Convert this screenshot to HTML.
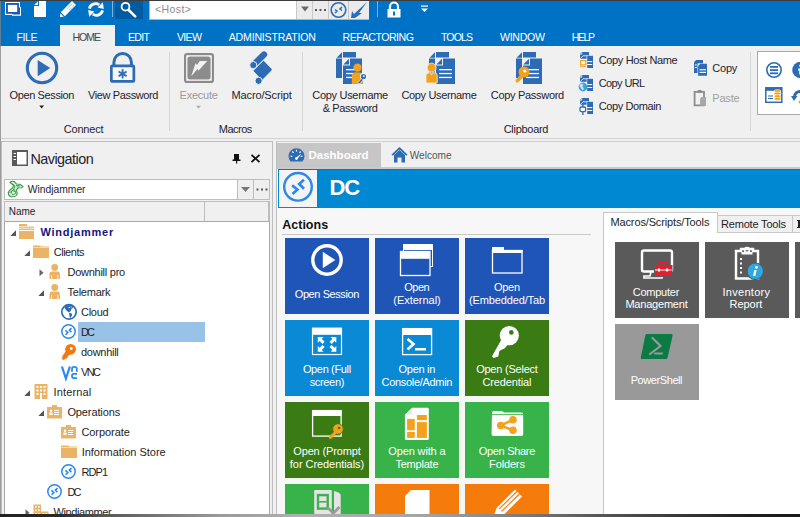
<!DOCTYPE html>
<html><head><meta charset="utf-8"><style>
html,body{margin:0;padding:0;width:800px;height:517px;overflow:hidden;background:#F0F0F0;}
.t{position:absolute;white-space:nowrap;line-height:1;font-family:"Liberation Sans", sans-serif;}
.r{position:absolute;}
.s{position:absolute;overflow:visible;}
</style></head><body>
<div class="r" style="left:0px;top:0px;width:800px;height:517px;background:#F0F0F0;"></div>
<div class="r" style="left:0px;top:0px;width:800px;height:46px;background:#0072C6;"></div>
<div class="r" style="left:0px;top:0px;width:800px;height:1px;background:#3d3d3d;"></div>
<div class="r" style="left:0px;top:1px;width:1px;height:516px;background:rgba(130,130,130,0.75);"></div>
<svg class="s" style="left:4px;top:1px" width="18" height="16" viewBox="0 0 18 16"><path d="M1 0.9 H16 V6 H17 V14.7 H8 V14 H1 Z" fill="#fff"/><rect x="2" y="2" width="12.9" height="10.8" fill="#1F56B0"/><rect x="8.5" y="6.5" width="7.5" height="7" fill="#1F56B0"/><rect x="3.9" y="3.9" width="9.3" height="7.1" fill="#fff"/></svg>
<svg class="s" style="left:33px;top:0px" width="14" height="18" viewBox="0 0 14 18"><path d="M6 1 H13 V17 H1 V6 H6 Z" fill="#fff"/><path d="M5 1.2 V5 H1.2 Z" fill="#fff"/></svg>
<svg class="s" style="left:59px;top:0px" width="18" height="18" viewBox="0 0 18 18"><path d="M1.8 12.3 L13 1.1 L17 5.1 L5.8 16.3 Z" fill="#fff"/><path d="M1 17 L1.3 13.3 L4.7 16.7 Z" fill="#fff"/><path d="M8.6 8.3 L13.8 3.1 M10.4 10 L15.6 4.8" stroke="#0072C6" stroke-width="0.7" stroke-dasharray="1 0.8"/></svg>
<svg class="s" style="left:87px;top:1px" width="18" height="17" viewBox="0 0 18 17"><path d="M2.4 7.6 A6.4 6.4 0 0 1 12.2 3.8" stroke="#fff" stroke-width="2.8" fill="none"/><path d="M10.6 6.6 L15.8 1.3 L16.8 7.9 Z" fill="#fff"/><path d="M15.6 9.4 A6.4 6.4 0 0 1 5.8 13.2" stroke="#fff" stroke-width="2.8" fill="none"/><path d="M7.4 10.4 L2.2 15.7 L1.2 9.1 Z" fill="#fff"/></svg>
<div class="r" style="left:112px;top:1px;width:1px;height:16px;background:#7fb2dd;"></div>
<div class="r" style="left:115px;top:1px;width:28px;height:18px;background:#005BA1;"></div>
<svg class="s" style="left:120px;top:2px" width="18" height="17" viewBox="0 0 18 17"><circle cx="5.5" cy="4.7" r="3.9" stroke="#fff" stroke-width="1.8" fill="none"/><path d="M8.6 8 L15.2 14.4" stroke="#fff" stroke-width="2.6" stroke-linecap="round"/></svg>
<div class="r" style="left:149px;top:1px;width:148px;height:18px;background:#fff;box-sizing:border-box;border-left:1px solid #9fb8d0;"></div>
<div class="t" style="left:155.0px;top:4px;font-size:10.5px;font-weight:400;color:#8c8c8c;letter-spacing:0.427px;">&lt;Host&gt;</div>
<div class="r" style="left:297px;top:1px;width:72px;height:18px;background:#EBEBEB;"></div>
<div class="r" style="left:296px;top:1px;width:1px;height:18px;background:#c8c8c8;"></div>
<div class="r" style="left:312px;top:1px;width:1px;height:18px;background:#c8c8c8;"></div>
<div class="r" style="left:328px;top:1px;width:1px;height:18px;background:#c8c8c8;"></div>
<div class="r" style="left:348px;top:1px;width:1px;height:18px;background:#c8c8c8;"></div>
<div class="r" style="left:149px;top:19px;width:220px;height:1px;background:#b4b4b4;"></div>
<svg class="s" style="left:300px;top:5px" width="10" height="8" viewBox="0 0 10 8"><path d="M1 1.5 H9 L5 6.5 Z" fill="#6a6a6a"/></svg>
<svg class="s" style="left:313px;top:8px" width="15" height="4" viewBox="0 0 15 4"><rect x="2" y="1" width="2" height="2" fill="#555"/><rect x="6.5" y="1" width="2" height="2" fill="#555"/><rect x="11" y="1" width="2" height="2" fill="#555"/></svg>
<svg class="s" style="left:329px;top:1px" width="19" height="18" viewBox="0 0 19 18"><circle cx="9.5" cy="9" r="7.3" fill="none" stroke="#2d6db5" stroke-width="1.6"/><path d="M6 8.5 L8 10 L6 12 M13 6 L11 8 L13 9.5" fill="none" stroke="#2d6db5" stroke-width="1.5"/></svg>
<svg class="s" style="left:349px;top:1px" width="20" height="18" viewBox="0 0 20 18"><path d="M18 1 L10 12 L13 12 L6 17 L2 17 L3 10 L5 13 Z" fill="#2d6db5"/></svg>
<div class="r" style="left:377px;top:1px;width:1px;height:16px;background:#7fb2dd;"></div>
<svg class="s" style="left:386px;top:1px" width="16" height="17" viewBox="0 0 16 17"><path d="M4 8 V5.5 A4 4 0 0 1 12 5.5 V8" stroke="#fff" stroke-width="2.2" fill="none"/><rect x="1.5" y="8" width="13" height="8.5" fill="#fff"/><rect x="7" y="10.5" width="2" height="4" fill="#0072C6"/></svg>
<svg class="s" style="left:420px;top:4px" width="9" height="9" viewBox="0 0 9 9"><rect x="1" y="1.5" width="7" height="1.2" fill="#fff"/><path d="M1 4.5 H8 L4.5 8 Z" fill="#fff"/></svg>
<div class="r" style="left:60px;top:25px;width:55px;height:21px;background:#F0F0F0;"></div>
<div class="t" style="left:16.5px;top:32px;font-size:10.6px;font-weight:400;color:#fff;letter-spacing:-0.455px;">FILE</div>
<div class="t" style="left:72.5px;top:32px;font-size:10.6px;font-weight:400;color:#444;letter-spacing:-1.1px;">HOME</div>
<div class="t" style="left:128.0px;top:32px;font-size:10.6px;font-weight:400;color:#fff;letter-spacing:-0.723px;">EDIT</div>
<div class="t" style="left:176.9px;top:32px;font-size:10.6px;font-weight:400;color:#fff;letter-spacing:-0.694px;">VIEW</div>
<div class="t" style="left:228.75px;top:32px;font-size:10.6px;font-weight:400;color:#fff;letter-spacing:-0.203px;">ADMINISTRATION</div>
<div class="t" style="left:342.5px;top:32px;font-size:10.6px;font-weight:400;color:#fff;letter-spacing:-0.487px;">REFACTORING</div>
<div class="t" style="left:441.0px;top:32px;font-size:10.6px;font-weight:400;color:#fff;letter-spacing:-0.931px;">TOOLS</div>
<div class="t" style="left:500.0px;top:32px;font-size:10.6px;font-weight:400;color:#fff;letter-spacing:-0.307px;">WINDOW</div>
<div class="t" style="left:571.75px;top:32px;font-size:10.6px;font-weight:400;color:#fff;letter-spacing:-1.472px;">HELP</div>
<div class="r" style="left:1px;top:138px;width:799px;height:1px;background:#D2D2D2;"></div>
<div class="r" style="left:169px;top:52px;width:1px;height:79px;background:#D6D6D6;"></div>
<div class="r" style="left:302px;top:52px;width:1px;height:79px;background:#D6D6D6;"></div>
<div class="r" style="left:750px;top:52px;width:1px;height:79px;background:#D6D6D6;"></div>
<div class="t" style="left:9.6px;top:90px;font-size:11px;font-weight:400;color:#23232f;letter-spacing:-0.389px;">Open Session</div>
<svg class="s" style="left:37px;top:105px" width="8" height="5" viewBox="0 0 8 5"><path d="M2.3 0.6 H7 L4.65 3.6 Z" fill="#222"/></svg>
<div class="t" style="left:88.0px;top:90px;font-size:11px;font-weight:400;color:#23232f;letter-spacing:-0.377px;">View Password</div>
<div class="t" style="left:63.8px;top:124px;font-size:11px;font-weight:400;color:#23232f;letter-spacing:-0.212px;">Connect</div>
<div class="t" style="left:179.5px;top:90px;font-size:11px;font-weight:400;color:#9a9a9a;letter-spacing:-0.211px;">Execute</div>
<svg class="s" style="left:194px;top:105px" width="8" height="5" viewBox="0 0 8 5"><path d="M2 0.8 H7 L4.5 3.6 Z" fill="#aaa"/></svg>
<div class="t" style="left:231.5px;top:90px;font-size:11px;font-weight:400;color:#23232f;letter-spacing:-0.133px;">Macro/Script</div>
<div class="t" style="left:218.8px;top:124px;font-size:11px;font-weight:400;color:#23232f;letter-spacing:-0.516px;">Macros</div>
<div class="t" style="left:312.25px;top:90px;font-size:11px;font-weight:400;color:#23232f;letter-spacing:-0.294px;">Copy Username</div>
<div class="t" style="left:322.75px;top:103px;font-size:11px;font-weight:400;color:#23232f;letter-spacing:-0.409px;">&amp; Password</div>
<div class="t" style="left:401.5px;top:90px;font-size:11px;font-weight:400;color:#23232f;letter-spacing:-0.352px;">Copy Username</div>
<div class="t" style="left:490.75px;top:90px;font-size:11px;font-weight:400;color:#23232f;letter-spacing:-0.296px;">Copy Password</div>
<div class="t" style="left:503.7px;top:124px;font-size:11px;font-weight:400;color:#23232f;letter-spacing:-0.285px;">Clipboard</div>
<div class="t" style="left:598.75px;top:55px;font-size:11px;font-weight:400;color:#23232f;letter-spacing:-0.367px;">Copy Host Name</div>
<div class="t" style="left:598.75px;top:78px;font-size:11px;font-weight:400;color:#23232f;letter-spacing:-0.609px;">Copy URL</div>
<div class="t" style="left:598.75px;top:101px;font-size:11px;font-weight:400;color:#23232f;letter-spacing:-0.396px;">Copy Domain</div>
<div class="t" style="left:712.3px;top:63px;font-size:11px;font-weight:400;color:#23232f;letter-spacing:-0.228px;">Copy</div>
<div class="t" style="left:712.3px;top:93px;font-size:11px;font-weight:400;color:#a0a0a0;letter-spacing:-0.201px;">Paste</div>
<div class="r" style="left:757px;top:51px;width:43px;height:64px;background:#fff;box-sizing:border-box;border:1px solid #a8a8a8;border-right:none;"></div>
<div class="r" style="left:1px;top:141px;width:272px;height:373px;background:#F0F0F0;box-sizing:border-box;border:1px solid #BDBDBD;border-bottom:none;"></div>
<svg class="s" style="left:12px;top:150px" width="16" height="16" viewBox="0 0 16 16"><rect x="0" y="0" width="16" height="16" fill="#595959"/><rect x="5" y="2" width="9.5" height="12.5" fill="#fff"/><rect x="1.5" y="3" width="2.5" height="1" fill="#fff"/><rect x="1.5" y="6" width="2.5" height="1" fill="#fff"/><rect x="1.5" y="9" width="2.5" height="1" fill="#fff"/></svg>
<div class="t" style="left:30.4px;top:152px;font-size:14.4px;font-weight:400;color:#23232f;letter-spacing:-0.516px;">Navigation</div>
<svg class="s" style="left:232px;top:154px" width="9" height="10" viewBox="0 0 9 10"><rect x="2" y="0" width="5" height="6" fill="#111"/><rect x="0.5" y="5.5" width="8" height="1.5" fill="#111"/><rect x="4" y="6.5" width="1.2" height="3" fill="#111"/></svg>
<svg class="s" style="left:250px;top:154px" width="11" height="9" viewBox="0 0 11 9"><path d="M1.5 0.8 L9.5 8.2 M9.5 0.8 L1.5 8.2" stroke="#111" stroke-width="1.8"/></svg>
<div class="r" style="left:4px;top:179px;width:266px;height:21px;background:#fff;box-sizing:border-box;border:1px solid #BDBDBD;"></div>
<div class="r" style="left:237px;top:180px;width:32px;height:19px;background:#EFEFEF;"></div>
<div class="r" style="left:237px;top:180px;width:1px;height:19px;background:#BDBDBD;"></div>
<div class="r" style="left:253px;top:180px;width:1px;height:19px;background:#BDBDBD;"></div>
<svg class="s" style="left:240px;top:186px" width="11" height="7" viewBox="0 0 11 7"><path d="M1 1 H10 L5.5 6 Z" fill="#777"/></svg>
<svg class="s" style="left:255px;top:188px" width="14" height="3" viewBox="0 0 14 3"><rect x="1.5" y="0.5" width="2" height="2" fill="#555"/><rect x="6" y="0.5" width="2" height="2" fill="#555"/><rect x="10.5" y="0.5" width="2" height="2" fill="#555"/></svg>
<svg class="s" style="left:8px;top:181px" width="16" height="17" viewBox="0 0 16 17"><path d="M2 1.5 Q4 -0.5 6.5 0.8 L8.5 3 L12 3.2 L15 5.5 L13.5 6.8 L10 7 L8.5 9 L9.2 12.5 Q8.5 15.5 6 15.8 L3 15.6 Q0 14.5 0.3 11.5 Q0.8 9.5 4.5 7 L5.8 4.5 Z" fill="#DDF0E0" stroke="#2E9E44" stroke-width="1.1"/><g fill="none" stroke="#2E9E44" stroke-width="0.9"><path d="M3.5 2.5 L7 5 L6 8 L3 11 L5 14 L8 12 L6 8"/><path d="M8 4.5 L12 5 M9 6.5 L11 4"/><path d="M1.5 12 L4 9.5 L7.5 10.5"/></g></svg>
<div class="t" style="left:27.75px;top:185px;font-size:10.3px;font-weight:400;color:#23232f;">Windjammer</div>
<div class="r" style="left:4px;top:201px;width:266px;height:21px;background:#F0F0F0;box-sizing:border-box;border:1px solid #BDBDBD;border-bottom-color:#A8A8A8;"></div>
<div class="r" style="left:204px;top:202px;width:1px;height:19px;background:#BDBDBD;"></div>
<div class="r" style="left:268px;top:202px;width:1px;height:19px;background:#BDBDBD;"></div>
<div class="t" style="left:8.7px;top:207px;font-size:10px;font-weight:400;color:#23232f;">Name</div>
<div class="r" style="left:4px;top:222px;width:266px;height:292px;background:#fff;box-sizing:border-box;border-left:1px solid #A8A8A8;border-right:1px solid #A8A8A8;"></div>
<div class="r" style="left:78px;top:322px;width:127px;height:20px;background:#99C2E8;"></div>
<svg class="s" style="left:10px;top:230px" width="7" height="7" viewBox="0 0 7 7"><path d="M6 0.3 V6 H0.3 Z" fill="#555"/></svg>
<svg class="s" style="left:19px;top:224px" width="16" height="15" viewBox="0 0 16 15"><rect x="0" y="0" width="8" height="2" fill="#EAB464"/><rect x="0" y="2.6" width="15" height="1.2" fill="#EAB464"/><rect x="0" y="4.6" width="15" height="1.4" fill="#EAB464"/><rect x="0" y="7" width="15" height="8" fill="#EAB464"/></svg>
<div class="t" style="left:40.4px;top:227px;font-size:11px;font-weight:700;color:#15157a;letter-spacing:0.768px;">Windjammer</div>
<svg class="s" style="left:24px;top:250px" width="7" height="7" viewBox="0 0 7 7"><path d="M6 0.3 V6 H0.3 Z" fill="#555"/></svg>
<svg class="s" style="left:33px;top:245px" width="16" height="13" viewBox="0 0 16 13"><path d="M0 0.5 H7 L8 1.5 H16 V2 H0 Z" fill="#EAB464"/><rect x="0" y="2.5" width="16" height="10.5" fill="#EAB464"/></svg>
<div class="t" style="left:53.7px;top:247px;font-size:11px;font-weight:400;color:#1e1e1e;letter-spacing:-0.468px;">Clients</div>
<svg class="s" style="left:39px;top:269px" width="5" height="8" viewBox="0 0 5 8"><path d="M0.5 0.3 L4.5 3.8 L0.5 7.3 Z" fill="#666"/></svg>
<svg class="s" style="left:49px;top:264px" width="12" height="15" viewBox="0 0 12 15"><circle cx="5.7" cy="3.5" r="3.4" fill="#EAB464"/><path d="M0.5 15 V9.8 Q0.5 7.5 2.8 7.5 H8.6 Q10.9 7.5 10.9 9.8 V15 Z" fill="#EAB464"/><rect x="2.2" y="11" width="0.8" height="4" fill="#fff"/><rect x="8.4" y="11" width="0.8" height="4" fill="#fff"/></svg>
<div class="t" style="left:67.5px;top:267px;font-size:11px;font-weight:400;color:#1e1e1e;letter-spacing:-0.26px;">Downhill pro</div>
<svg class="s" style="left:38px;top:290px" width="7" height="7" viewBox="0 0 7 7"><path d="M6 0.3 V6 H0.3 Z" fill="#555"/></svg>
<svg class="s" style="left:49px;top:284px" width="12" height="15" viewBox="0 0 12 15"><circle cx="5.7" cy="3.5" r="3.4" fill="#EAB464"/><path d="M0.5 15 V9.8 Q0.5 7.5 2.8 7.5 H8.6 Q10.9 7.5 10.9 9.8 V15 Z" fill="#EAB464"/><rect x="2.2" y="11" width="0.8" height="4" fill="#fff"/><rect x="8.4" y="11" width="0.8" height="4" fill="#fff"/></svg>
<div class="t" style="left:67.5px;top:287px;font-size:11px;font-weight:400;color:#1e1e1e;letter-spacing:-0.237px;">Telemark</div>
<svg class="s" style="left:61px;top:304px" width="16" height="16" viewBox="0 0 16 16"><circle cx="8" cy="7.9" r="7.2" fill="none" stroke="#2D6DB5" stroke-width="1.7"/><path d="M3.3 2.6 L6 0.8 L10 0.8 L12.2 2.2 L11.8 4 L10.4 5 L9.8 7 L8.5 8 L7.8 8.6 L6 7 L4.3 5.3 Z" fill="#2D6DB5"/><path d="M8.3 8.8 L10.6 9.5 L11.3 11 L10 13 L9 14.8 L8.5 12 L8 10 Z" fill="#2D6DB5"/><circle cx="8.2" cy="3.4" r="0.7" fill="#fff"/><circle cx="10.2" cy="3" r="0.6" fill="#fff"/></svg>
<div class="t" style="left:81.0px;top:307px;font-size:11px;font-weight:400;color:#1e1e1e;letter-spacing:-0.291px;">Cloud</div>
<svg class="s" style="left:61px;top:324px" width="15" height="15" viewBox="0 0 15 15"><circle cx="7.5" cy="7.5" r="6.7" fill="#fff" stroke="#2B88F0" stroke-width="1.5"/><path d="M4.4 6.4 L6.8 8.5 L4.6 10.7 M10.5 4.2 L8.4 6.1 L10.4 8.2" fill="none" stroke="#2B88F0" stroke-width="1.6"/></svg>
<div class="t" style="left:81.0px;top:327px;font-size:11px;font-weight:400;color:#1e1e1e;letter-spacing:-1.895px;">DC</div>
<svg class="s" style="left:62px;top:344px" width="15" height="16" viewBox="0 0 15 16"><circle cx="8.6" cy="5.3" r="5.4" fill="#F07A10"/><circle cx="9.3" cy="4.5" r="1.4" fill="#fff"/><path d="M4.2 6.5 L8.6 9.8 L5.5 12.8 L5.5 13.8 L4.5 14.5 L3.5 14.5 L2.5 15.8 H0.3 V12.2 Z" fill="#F07A10"/></svg>
<div class="t" style="left:81.0px;top:347px;font-size:11px;font-weight:400;color:#1e1e1e;letter-spacing:-0.281px;">downhill</div>
<svg class="s" style="left:61px;top:366px" width="17" height="14" viewBox="0 0 17 14"><path d="M0.9 0.5 L4.9 12.6 L8.9 0.5" fill="none" stroke="#2B88F0" stroke-width="2.2"/><path d="M11 5.8 V2.8 Q11 0.8 13.4 0.8 Q15.8 0.8 15.8 2.8 V5.8" fill="none" stroke="#2B88F0" stroke-width="1.8"/><path d="M16 7.8 H12.8 Q11 7.8 11 10.1 Q11 12.2 12.8 12.2 H16" fill="none" stroke="#2B88F0" stroke-width="1.8"/></svg>
<div class="t" style="left:81.0px;top:367px;font-size:11px;font-weight:400;color:#1e1e1e;letter-spacing:-1.605px;">VNC</div>
<svg class="s" style="left:24px;top:390px" width="7" height="7" viewBox="0 0 7 7"><path d="M6 0.3 V6 H0.3 Z" fill="#555"/></svg>
<svg class="s" style="left:34px;top:384px" width="14" height="15" viewBox="0 0 14 15"><rect x="0.5" y="0" width="13" height="15" fill="#EAB464"/><g fill="#fff"><rect x="2.5" y="2" width="2" height="2"/><rect x="6" y="2" width="2" height="2"/><rect x="9.5" y="2" width="2" height="2"/><rect x="2.5" y="5.5" width="2" height="2"/><rect x="6" y="5.5" width="2" height="2"/><rect x="9.5" y="5.5" width="2" height="2"/><rect x="2.5" y="9" width="2" height="2"/><rect x="9.5" y="9" width="2" height="2"/><rect x="6" y="9" width="2" height="6"/></g></svg>
<div class="t" style="left:53.6px;top:387px;font-size:11px;font-weight:400;color:#1e1e1e;letter-spacing:0.145px;">Internal</div>
<svg class="s" style="left:38px;top:410px" width="7" height="7" viewBox="0 0 7 7"><path d="M6 0.3 V6 H0.3 Z" fill="#555"/></svg>
<svg class="s" style="left:47px;top:405px" width="16" height="14" viewBox="0 0 16 14"><rect x="5" y="0" width="5" height="3" fill="#EAB464"/><rect x="0" y="2" width="15" height="11.5" fill="#EAB464"/><g fill="#fff"><circle cx="4" cy="5.8" r="1.2"/><rect x="2.5" y="7.5" width="3" height="2.5"/><rect x="7" y="5" width="5" height="1"/><rect x="7" y="7" width="5" height="1"/><rect x="7" y="9" width="5" height="1"/></g></svg>
<div class="t" style="left:67.4px;top:407px;font-size:11px;font-weight:400;color:#1e1e1e;letter-spacing:-0.11px;">Operations</div>
<svg class="s" style="left:61px;top:425px" width="16" height="14" viewBox="0 0 16 14"><rect x="5" y="0" width="5" height="3" fill="#EAB464"/><rect x="0" y="2" width="15" height="11.5" fill="#EAB464"/><g fill="#fff"><circle cx="4" cy="5.8" r="1.2"/><rect x="2.5" y="7.5" width="3" height="2.5"/><rect x="7" y="5" width="5" height="1"/><rect x="7" y="7" width="5" height="1"/><rect x="7" y="9" width="5" height="1"/></g></svg>
<div class="t" style="left:81.4px;top:427px;font-size:11px;font-weight:400;color:#1e1e1e;letter-spacing:-0.062px;">Corporate</div>
<svg class="s" style="left:61px;top:445px" width="16" height="13" viewBox="0 0 16 13"><path d="M0 0.5 H7 L8 1.5 H16 V2 H0 Z" fill="#EAB464"/><rect x="0" y="2.5" width="16" height="10.5" fill="#EAB464"/></svg>
<div class="t" style="left:81.7px;top:447px;font-size:11px;font-weight:400;color:#1e1e1e;letter-spacing:-0.023px;">Information Store</div>
<svg class="s" style="left:61px;top:464px" width="15" height="15" viewBox="0 0 15 15"><circle cx="7.5" cy="7.5" r="6.7" fill="#fff" stroke="#2B88F0" stroke-width="1.5"/><path d="M4.4 6.4 L6.8 8.5 L4.6 10.7 M10.5 4.2 L8.4 6.1 L10.4 8.2" fill="none" stroke="#2B88F0" stroke-width="1.6"/></svg>
<div class="t" style="left:81.4px;top:467px;font-size:11px;font-weight:400;color:#1e1e1e;letter-spacing:-0.89px;">RDP1</div>
<svg class="s" style="left:47px;top:484px" width="15" height="15" viewBox="0 0 15 15"><circle cx="7.5" cy="7.5" r="6.7" fill="#fff" stroke="#2B88F0" stroke-width="1.5"/><path d="M4.4 6.4 L6.8 8.5 L4.6 10.7 M10.5 4.2 L8.4 6.1 L10.4 8.2" fill="none" stroke="#2B88F0" stroke-width="1.6"/></svg>
<div class="t" style="left:67.4px;top:487px;font-size:11px;font-weight:400;color:#1e1e1e;letter-spacing:-1.895px;">DC</div>
<svg class="s" style="left:25px;top:509px" width="5" height="8" viewBox="0 0 5 8"><path d="M0.5 0.3 L4.5 3.8 L0.5 7.3 Z" fill="#666"/></svg>
<svg class="s" style="left:33px;top:504px" width="16" height="15" viewBox="0 0 16 15"><rect x="0.5" y="0.5" width="7.5" height="14" fill="#EAB464"/><rect x="8" y="7.5" width="7.5" height="7" fill="#EAB464"/><g fill="#fff"><rect x="2" y="2" width="1.6" height="1.6"/><rect x="5" y="2" width="1.6" height="1.6"/><rect x="2" y="5.5" width="1.6" height="1.6"/><rect x="5" y="5.5" width="1.6" height="1.6"/><rect x="2" y="9" width="1.6" height="1.6"/><rect x="5" y="9" width="1.6" height="1.6"/><rect x="9.5" y="9" width="1.6" height="1.6"/><rect x="12.5" y="9" width="1.6" height="1.6"/></g></svg>
<div class="t" style="left:53.6px;top:507px;font-size:11px;font-weight:400;color:#1e1e1e;letter-spacing:-0.412px;">Windjammer</div>
<div class="r" style="left:276px;top:141px;width:524px;height:373px;background:#F7F7F7;box-sizing:border-box;border-left:1px solid #BDBDBD;border-top:1px solid #CFCFCF;"></div>
<div class="r" style="left:277px;top:142px;width:523px;height:26px;background:#F0F0F0;"></div>
<div class="r" style="left:277px;top:167px;width:523px;height:2px;background:#C9C9C9;"></div>
<div class="r" style="left:277px;top:143px;width:104px;height:24px;background:#C6C6C6;"></div>
<div class="t" style="left:308.5px;top:150px;font-size:11.5px;font-weight:700;color:#fff;">Dashboard</div>
<div class="t" style="left:409.75px;top:151px;font-size:10.1px;font-weight:400;color:#555;">Welcome</div>
<div class="r" style="left:278px;top:169px;width:522px;height:39px;background:#0089D3;"></div>
<div class="r" style="left:278px;top:169px;width:522px;height:1px;background:#0079C9;"></div>
<div class="r" style="left:279px;top:170px;width:38px;height:37px;background:#F4F4F4;"></div>
<div class="t" style="left:329.5px;top:177px;font-size:22px;font-weight:700;color:#fff;letter-spacing:-1.2px;">DC</div>
<div class="t" style="left:282.25px;top:219px;font-size:12.5px;font-weight:700;color:#111;">Actions</div>
<div class="r" style="left:282px;top:234px;width:309px;height:1px;background:#C8C8C8;"></div>
<div class="r" style="left:285px;top:238px;width:84px;height:76px;background:#1F55B6;"></div>
<div class="r" style="left:375px;top:238px;width:84px;height:76px;background:#1F55B6;"></div>
<div class="r" style="left:465px;top:238px;width:84px;height:76px;background:#1F55B6;"></div>
<div class="r" style="left:285px;top:320px;width:84px;height:76px;background:#0A8AD5;"></div>
<div class="r" style="left:375px;top:320px;width:84px;height:76px;background:#0A8AD5;"></div>
<div class="r" style="left:465px;top:320px;width:84px;height:76px;background:#3A7B14;"></div>
<div class="r" style="left:285px;top:402px;width:84px;height:76px;background:#3A7B14;"></div>
<div class="r" style="left:375px;top:402px;width:84px;height:76px;background:#37B34A;"></div>
<div class="r" style="left:465px;top:402px;width:84px;height:76px;background:#37B34A;"></div>
<div class="r" style="left:285px;top:484px;width:84px;height:30px;background:#37B34A;"></div>
<div class="r" style="left:375px;top:484px;width:84px;height:30px;background:#F57C0A;"></div>
<div class="r" style="left:465px;top:484px;width:84px;height:30px;background:#F57C0A;"></div>
<div class="t" style="left:294.75px;top:289px;font-size:11px;font-weight:400;color:#fff;letter-spacing:-0.416px;">Open Session</div>
<div class="t" style="left:404.3px;top:282px;font-size:11px;font-weight:400;color:#fff;letter-spacing:-0.498px;">Open</div>
<div class="t" style="left:393.25px;top:295px;font-size:11px;font-weight:400;color:#fff;letter-spacing:-0.021px;">(External)</div>
<div class="t" style="left:493.95px;top:282px;font-size:11px;font-weight:400;color:#fff;letter-spacing:-0.265px;">Open</div>
<div class="t" style="left:469.0px;top:295px;font-size:11px;font-weight:400;color:#fff;letter-spacing:-0.138px;">(Embedded/Tab</div>
<div class="t" style="left:302.9px;top:364px;font-size:11px;font-weight:400;color:#fff;letter-spacing:-0.352px;">Open (Full</div>
<div class="t" style="left:309.65px;top:377px;font-size:11px;font-weight:400;color:#fff;letter-spacing:-0.331px;">screen)</div>
<div class="t" style="left:398.6px;top:364px;font-size:11px;font-weight:400;color:#fff;letter-spacing:-0.293px;">Open in</div>
<div class="t" style="left:381.55px;top:377px;font-size:11px;font-weight:400;color:#fff;letter-spacing:-0.307px;">Console/Admin</div>
<div class="t" style="left:476.15px;top:364px;font-size:11px;font-weight:400;color:#fff;letter-spacing:-0.226px;">Open (Select</div>
<div class="t" style="left:482.5px;top:377px;font-size:11px;font-weight:400;color:#fff;letter-spacing:-0.129px;">Credential</div>
<div class="t" style="left:293.25px;top:446px;font-size:11px;font-weight:400;color:#fff;letter-spacing:-0.144px;">Open (Prompt</div>
<div class="t" style="left:289.85px;top:459px;font-size:11px;font-weight:400;color:#fff;letter-spacing:-0.059px;">for Credentials)</div>
<div class="t" style="left:388.35px;top:446px;font-size:11px;font-weight:400;color:#fff;letter-spacing:-0.144px;">Open with a</div>
<div class="t" style="left:395.4px;top:459px;font-size:11px;font-weight:400;color:#fff;letter-spacing:-0.209px;">Template</div>
<div class="t" style="left:478.7px;top:446px;font-size:11px;font-weight:400;color:#fff;letter-spacing:-0.305px;">Open Share</div>
<div class="t" style="left:489.1px;top:459px;font-size:11px;font-weight:400;color:#fff;letter-spacing:-0.148px;">Folders</div>
<div class="r" style="left:603px;top:232px;width:197px;height:282px;background:#fff;box-sizing:border-box;border-left:1px solid #C8C8C8;"></div>
<div class="r" style="left:603px;top:212px;width:115px;height:21px;background:#fff;box-sizing:border-box;border:1px solid #C8C8C8;border-bottom:none;"></div>
<div class="r" style="left:718px;top:215px;width:75px;height:18px;background:#F0F0F0;box-sizing:border-box;border:1px solid #C8C8C8;border-left:none;"></div>
<div class="r" style="left:793px;top:215px;width:7px;height:18px;background:#F0F0F0;box-sizing:border-box;border-top:1px solid #C8C8C8;border-bottom:1px solid #C8C8C8;"></div>
<div class="r" style="left:718px;top:232px;width:82px;height:1px;background:#C8C8C8;"></div>
<div class="t" style="left:610.5px;top:217px;font-size:11px;font-weight:400;color:#1e1e1e;letter-spacing:-0.136px;">Macros/Scripts/Tools</div>
<div class="t" style="left:721.0px;top:219px;font-size:11px;font-weight:400;color:#1e1e1e;letter-spacing:-0.186px;">Remote Tools</div>
<div class="r" style="left:798px;top:220px;width:2px;height:8px;background:#222;"></div>
<div class="r" style="left:797px;top:220px;width:3px;height:1px;background:#222;"></div>
<div class="r" style="left:797px;top:227px;width:3px;height:1px;background:#222;"></div>
<div class="r" style="left:615px;top:242px;width:84px;height:76px;background:#5A5A5A;"></div>
<div class="r" style="left:705px;top:242px;width:84px;height:76px;background:#5A5A5A;"></div>
<div class="r" style="left:795px;top:242px;width:5px;height:76px;background:#5A5A5A;"></div>
<div class="r" style="left:615px;top:324px;width:84px;height:76px;background:#999999;"></div>
<div class="t" style="left:632.7px;top:287px;font-size:11px;font-weight:400;color:#fff;letter-spacing:-0.227px;">Computer</div>
<div class="t" style="left:625.4px;top:299px;font-size:11px;font-weight:400;color:#fff;letter-spacing:-0.209px;">Management</div>
<div class="t" style="left:722.5px;top:287px;font-size:11px;font-weight:400;color:#fff;letter-spacing:0.279px;">Inventory</div>
<div class="t" style="left:729.5px;top:299px;font-size:11px;font-weight:400;color:#fff;letter-spacing:-0.02px;">Report</div>
<div class="t" style="left:630.7px;top:375px;font-size:11px;font-weight:400;color:#fff;letter-spacing:-0.418px;">PowerShell</div>
<svg class="s" style="left:25px;top:51px" width="34" height="34" viewBox="0 0 34 34"><circle cx="17" cy="17" r="14.7" fill="none" stroke="#2D6BB5" stroke-width="3.1"/><path d="M12.7 9 L25.2 17.1 L12.7 25.2 Z" fill="#2D6BB5"/></svg>
<svg class="s" style="left:109px;top:51px" width="27" height="33" viewBox="0 0 27 33"><path d="M4.9 14 V11.15 A8.75 8.75 0 0 1 22.4 11.15 V14" fill="none" stroke="#2D6BB5" stroke-width="3"/><rect x="2.35" y="14.95" width="22.5" height="15.5" rx="0.8" fill="#F6F6F6" stroke="#2D6BB5" stroke-width="2.7"/><g stroke="#2D6BB5" stroke-width="1.9"><path d="M13.6 18.2 V27.4"/><path d="M9.6 20.5 L17.6 25.1"/><path d="M9.6 25.1 L17.6 20.5"/></g></svg>
<svg class="s" style="left:184px;top:53px" width="30" height="30" viewBox="0 0 30 30"><rect x="1.1" y="1.1" width="27.8" height="27.8" rx="2" fill="#fff" stroke="#8a8a8a" stroke-width="2.2"/><rect x="3.4" y="3.4" width="23.2" height="23.2" rx="2.5" fill="#8c8c8c"/><path d="M15.8 7.9 L23.3 7.9 L14.4 17.8 L13.8 15.8 L7.2 23.3 L11.5 10.2 L13 12 Z" fill="#f2f2f2"/></svg>
<svg class="s" style="left:246px;top:50px" width="30" height="36" viewBox="0 0 30 36"><path d="M18 4.6 L8.5 14" stroke="#2D6BB5" stroke-width="6.4" stroke-linecap="round"/><path d="M17.6 10.2 L25.6 18.4 Q26.7 19.6 25.6 20.8 L16 30.6 L6.8 20.8 Z" fill="#2D6BB5" stroke="#F0F0F0" stroke-width="0.9"/><circle cx="7.3" cy="15.1" r="3.6" fill="#2D6BB5" stroke="#F0F0F0" stroke-width="1"/><circle cx="12.6" cy="30.8" r="3.6" fill="#2D6BB5" stroke="#F0F0F0" stroke-width="1"/></svg>
<svg class="s" style="left:336px;top:52px" width="27" height="33" viewBox="0 0 27 33"><path d="M7 0 H20 V26 H0 V6.5 H7 Z" fill="#2D6BB5"/><path d="M6 0.3 V5.7 H0.6 Z" fill="#2D6BB5"/><rect x="6" y="5.5" width="21" height="27.5" fill="#F0F0F0"/><path d="M14 6.5 H26 V32 H7 V13.5 H14 Z" fill="#2D6BB5"/><path d="M13 6.8 V12.5 H7.3 Z" fill="#2D6BB5"/><rect x="10" y="17" width="13" height="1.3" fill="#fff"/><rect x="10" y="20.9" width="13" height="1.3" fill="#fff"/><rect x="10" y="24.8" width="13" height="1.3" fill="#fff"/></svg>
<svg class="s" style="left:350px;top:63px" width="18" height="22" viewBox="0 0 18 22"><circle cx="7.5" cy="4.6" r="4.2" fill="#F4A11E"/><path d="M1.8 21 V13 Q1.8 9.5 5 9.5 H10 Q13 9.5 13 13 V21 Z" fill="#F4A11E"/><circle cx="13.5" cy="13.5" r="3.5" fill="#fff"/><circle cx="13.5" cy="13.5" r="2.6" fill="#2D6BB5"/><circle cx="13.8" cy="13.2" r="0.9" fill="#fff"/><path d="M11.5 15.5 L8 19.5 L9.5 21 L13 17" fill="#2D6BB5" stroke="#fff" stroke-width="0.6"/></svg>
<svg class="s" style="left:429px;top:52px" width="27" height="33" viewBox="0 0 27 33"><path d="M7 0 H20 V26 H0 V6.5 H7 Z" fill="#2D6BB5"/><path d="M6 0.3 V5.7 H0.6 Z" fill="#2D6BB5"/><rect x="6" y="5.5" width="21" height="27.5" fill="#F0F0F0"/><path d="M14 6.5 H26 V32 H7 V13.5 H14 Z" fill="#2D6BB5"/><path d="M13 6.8 V12.5 H7.3 Z" fill="#2D6BB5"/><rect x="10" y="17" width="13" height="1.3" fill="#fff"/><rect x="10" y="20.9" width="13" height="1.3" fill="#fff"/><rect x="10" y="24.8" width="13" height="1.3" fill="#fff"/></svg>
<svg class="s" style="left:425px;top:62px" width="14" height="22" viewBox="0 0 14 22"><circle cx="6.6" cy="5.7" r="4.5" fill="#F4A11E" stroke="#F0F0F0" stroke-width="0.8"/><path d="M1 21 V13.5 Q1 10.8 4 10.8 H5.8 L6.6 13 L7.4 10.8 H9.2 Q12.2 10.8 12.2 13.5 V21 Z" fill="#F4A11E" stroke="#F0F0F0" stroke-width="0.8"/></svg>
<svg class="s" style="left:516px;top:52px" width="27" height="33" viewBox="0 0 27 33"><path d="M7 0 H20 V26 H0 V6.5 H7 Z" fill="#2D6BB5"/><path d="M6 0.3 V5.7 H0.6 Z" fill="#2D6BB5"/><rect x="6" y="5.5" width="21" height="27.5" fill="#F0F0F0"/><path d="M14 6.5 H26 V32 H7 V13.5 H14 Z" fill="#2D6BB5"/><path d="M13 6.8 V12.5 H7.3 Z" fill="#2D6BB5"/><rect x="10" y="17" width="13" height="1.3" fill="#fff"/><rect x="10" y="20.9" width="13" height="1.3" fill="#fff"/><rect x="10" y="24.8" width="13" height="1.3" fill="#fff"/></svg>
<svg class="s" style="left:515px;top:66px" width="16" height="18" viewBox="0 0 16 18"><circle cx="9" cy="6" r="5.5" fill="#F4A11E"/><circle cx="9.8" cy="5" r="1.6" fill="#fff"/><path d="M5 9 L8 11.5 L3 16.5 L1 16.5 L0.5 14 Z" fill="#F4A11E"/></svg>
<svg class="s" style="left:579px;top:51px" width="15" height="18" viewBox="0 0 15 18"><path d="M3.2 1 H10 V7.8 H1 V3.4 H3.2 Z" fill="#2D6BB5"/><path d="M2.5 1 V2.6 H1 Z" fill="#2D6BB5"/><path d="M1 7.8 L4 4.8 H9" stroke="#fff" stroke-width="0.8" fill="none"/><rect x="7.6" y="4.4" width="7" height="13.2" fill="#F0F0F0"/><rect x="8.2" y="4.8" width="5.8" height="12.2" fill="#2D6BB5"/><rect x="8.2" y="10.1" width="5" height="1" fill="#fff"/><rect x="8.2" y="13" width="5" height="1" fill="#fff"/></svg>
<svg class="s" style="left:580px;top:60px" width="7" height="8" viewBox="0 0 7 8"><rect x="0.6" y="0.6" width="5.2" height="4.2" fill="#fff" stroke="#F4A11E" stroke-width="1.2"/><rect x="0" y="6.2" width="6" height="1" fill="#F4A11E"/></svg>
<svg class="s" style="left:579px;top:74px" width="15" height="18" viewBox="0 0 15 18"><path d="M3.2 1 H10 V7.8 H1 V3.4 H3.2 Z" fill="#2D6BB5"/><path d="M2.5 1 V2.6 H1 Z" fill="#2D6BB5"/><path d="M1 7.8 L4 4.8 H9" stroke="#fff" stroke-width="0.8" fill="none"/><rect x="7.6" y="4.4" width="7" height="13.2" fill="#F0F0F0"/><rect x="8.2" y="4.8" width="5.8" height="12.2" fill="#2D6BB5"/><rect x="8.2" y="10.1" width="5" height="1" fill="#fff"/><rect x="8.2" y="13" width="5" height="1" fill="#fff"/></svg>
<svg class="s" style="left:578px;top:82px" width="10" height="10" viewBox="0 0 10 10"><circle cx="5" cy="5" r="4.4" fill="#38A3DE"/><path d="M3 1.5 L5.5 2.5 L4.5 4.5 L6 6.5 L4.5 8.5 L2.8 6 L1.5 4 Z" fill="#F0F0F0" opacity="0.8"/></svg>
<svg class="s" style="left:579px;top:97px" width="15" height="18" viewBox="0 0 15 18"><path d="M3.2 1 H10 V7.8 H1 V3.4 H3.2 Z" fill="#2D6BB5"/><path d="M2.5 1 V2.6 H1 Z" fill="#2D6BB5"/><path d="M1 7.8 L4 4.8 H9" stroke="#fff" stroke-width="0.8" fill="none"/><rect x="7.6" y="4.4" width="7" height="13.2" fill="#F0F0F0"/><rect x="8.2" y="4.8" width="5.8" height="12.2" fill="#2D6BB5"/><rect x="8.2" y="10.1" width="5" height="1" fill="#fff"/><rect x="8.2" y="13" width="5" height="1" fill="#fff"/></svg>
<svg class="s" style="left:579px;top:104px" width="8" height="11" viewBox="0 0 8 11"><rect x="3.2" y="0" width="1.3" height="11" fill="#2D6BB5"/><rect x="1" y="3" width="5.6" height="4.6" rx="1.4" fill="#fff" stroke="#2D6BB5" stroke-width="1.3"/></svg>
<svg class="s" style="left:693px;top:59px" width="16" height="18" viewBox="0 0 16 18"><path d="M3.5 1 H10 V14 H1 V3.5 Z" fill="#2D6BB5"/><path d="M3 1.2 V3 H1.2 Z" fill="#2D6BB5"/><rect x="4.5" y="4.3" width="11" height="13.5" fill="#F0F0F0"/><path d="M7.5 4.8 H14 V16.8 H5.1 V7.2 Z" fill="#2D6BB5"/><path d="M7 5.2 V6.8 H5.4 Z" fill="#2D6BB5"/><rect x="6.5" y="10.2" width="6.5" height="1.1" fill="#fff"/><rect x="6.5" y="12.8" width="6.5" height="1.1" fill="#fff"/><rect x="1.8" y="5.5" width="2" height="1" fill="#fff"/><rect x="1.8" y="8" width="2" height="1" fill="#fff"/></svg>
<svg class="s" style="left:693px;top:89px" width="14" height="18" viewBox="0 0 14 18"><path d="M1.6 2.8 H11 V16.4 H1.6 Z" fill="none" stroke="#8c8c8c" stroke-width="1.8"/><rect x="4.8" y="1" width="3.8" height="3" fill="#8c8c8c"/><path d="M8.5 8 H13 V16.8 H7 V9.5 Z" fill="#a8a8a8"/></svg>
<svg class="s" style="left:765px;top:61px" width="18" height="18" viewBox="0 0 18 18"><circle cx="9" cy="9" r="7.2" fill="none" stroke="#2D6BB5" stroke-width="1.6"/><rect x="5" y="5" width="8" height="1.8" fill="#2D6BB5"/><rect x="5" y="8.2" width="8" height="1.8" fill="#2D6BB5"/><rect x="5" y="11.4" width="8" height="1.8" fill="#2D6BB5"/></svg>
<svg class="s" style="left:791px;top:61px" width="10" height="18" viewBox="0 0 10 18"><circle cx="9.5" cy="9" r="8.3" fill="#2D6BB5"/><path d="M7 7.5 H10.5 V13.5 H8.2 V9.5 H7 Z" fill="#fff"/><circle cx="9.5" cy="4.8" r="1.3" fill="#fff"/></svg>
<svg class="s" style="left:765px;top:87px" width="18" height="17" viewBox="0 0 18 17"><rect x="0.8" y="0.8" width="16" height="14.5" fill="#fff" stroke="#2D6BB5" stroke-width="1.5"/><rect x="0.8" y="0.8" width="16" height="3" fill="#2D6BB5"/><rect x="3" y="8.5" width="5" height="1" fill="#2D6BB5"/><rect x="3" y="11" width="5" height="1" fill="#2D6BB5"/><g fill="#F4A11E" stroke="#fff" stroke-width="0.5"><ellipse cx="12.5" cy="4" rx="3.3" ry="1.5"/><ellipse cx="12.5" cy="6.6" rx="3.3" ry="1.5"/><ellipse cx="12.5" cy="9.2" rx="3.3" ry="1.5"/><ellipse cx="12.5" cy="11.8" rx="3.3" ry="1.5"/></g></svg>
<svg class="s" style="left:791px;top:88px" width="10" height="16" viewBox="0 0 10 16"><path d="M10 3.5 A5.5 5.5 0 0 0 3.5 9" fill="none" stroke="#2D6BB5" stroke-width="3"/><path d="M0 8 L6.5 8 L3 13 Z" fill="#2D6BB5"/><circle cx="9" cy="14" r="1.5" fill="#F4A11E"/></svg>
<svg class="s" style="left:288px;top:147px" width="18" height="16" viewBox="0 0 18 16"><path d="M2.5 14.5 A8 8 0 1 1 14.5 14.5 Z" fill="#2D6BB5"/><g stroke="#fff" stroke-width="1.3"><path d="M2.5 9 L4.2 9.5"/><path d="M4.3 4.6 L5.6 5.8"/><path d="M8.5 2.8 V4.5"/><path d="M12.7 4.6 L11.4 5.8"/><path d="M14.5 9 L12.8 9.5"/></g><path d="M7.5 11 L13.5 6.5 L9.3 12.3 Z" fill="#fff"/><circle cx="8.4" cy="11.6" r="1.4" fill="#fff"/></svg>
<svg class="s" style="left:391px;top:146px" width="17" height="17" viewBox="0 0 17 17"><path d="M0.5 8.5 L8.5 1 L16.5 8.5 L15.2 9.8 L8.5 3.6 L1.8 9.8 Z" fill="#2D6BB5"/><path d="M3 9 L8.5 4 L14 9 V16.5 H10.5 V11.5 H6.5 V16.5 H3 Z" fill="#2D6BB5"/></svg>
<svg class="s" style="left:282px;top:171px" width="32" height="32" viewBox="0 0 32 32"><circle cx="16" cy="15.8" r="13.8" fill="none" stroke="#2B88F0" stroke-width="2.4"/><path d="M10.2 14.4 L15.4 18.5 L10.5 23 M22 8.8 L17.2 13 L22 17.8" fill="none" stroke="#2B88F0" stroke-width="2.7"/></svg>
<svg class="s" style="left:285px;top:238px" width="84" height="40" viewBox="0 0 84 40"><circle cx="42" cy="22" r="14.2" fill="none" stroke="#fff" stroke-width="3.4"/><path d="M37.8 13.8 L50.3 22 L37.8 30.3 Z" fill="#fff"/></svg>
<svg class="s" style="left:375px;top:238px" width="84" height="40" viewBox="0 0 84 40"><rect x="28.5" y="6.5" width="29" height="22" fill="none" stroke="#fff"/><rect x="28" y="6" width="30" height="6" fill="#fff"/><rect x="25.5" y="13.5" width="29.5" height="24" fill="#1F55B6" stroke="#fff" stroke-width="1.3"/><rect x="25.8" y="13.8" width="29" height="7" fill="#fff"/></svg>
<svg class="s" style="left:465px;top:238px" width="84" height="40" viewBox="0 0 84 40"><rect x="27.5" y="12.5" width="29.5" height="22.5" fill="none" stroke="#fff" stroke-width="1.3"/><rect x="27" y="9" width="12" height="4" fill="#fff"/><rect x="27" y="12" width="30.5" height="3" fill="#fff"/></svg>
<svg class="s" style="left:285px;top:320px" width="84" height="40" viewBox="0 0 84 40"><rect x="27.5" y="8.3" width="29" height="26.2" fill="none" stroke="#fff" stroke-width="1.2"/><rect x="27" y="7.8" width="30" height="7" fill="#fff"/><g fill="#fff"><path d="M32.8 17 H38.6 L36.7 18.9 L39.6 21.8 L37.5 23.9 L34.6 21 L32.8 22.8 Z"/><path d="M32.8 17 H38.6 L36.7 18.9 L39.6 21.8 L37.5 23.9 L34.6 21 L32.8 22.8 Z" transform="translate(84.1 0) scale(-1 1)"/><path d="M32.8 17 H38.6 L36.7 18.9 L39.6 21.8 L37.5 23.9 L34.6 21 L32.8 22.8 Z" transform="translate(0 48.8) scale(1 -1)"/><path d="M32.8 17 H38.6 L36.7 18.9 L39.6 21.8 L37.5 23.9 L34.6 21 L32.8 22.8 Z" transform="translate(84.1 48.8) scale(-1 -1)"/></g></svg>
<svg class="s" style="left:375px;top:320px" width="84" height="40" viewBox="0 0 84 40"><rect x="27.6" y="8.6" width="29" height="26" fill="none" stroke="#fff" stroke-width="1.3"/><rect x="27" y="8" width="30" height="7" fill="#fff"/><path d="M32.5 19 L38.5 24 L32.5 29.5" fill="none" stroke="#fff" stroke-width="2.6"/><rect x="40" y="28" width="11" height="2.5" fill="#fff"/></svg>
<svg class="s" style="left:465px;top:320px" width="84" height="40" viewBox="0 0 84 40"><circle cx="44.3" cy="15.6" r="9.6" fill="#fff"/><circle cx="46.3" cy="12.4" r="2.3" fill="#3A7B14"/><path d="M37 18.5 L43 24.5 L39.5 28.5 L36 30 L34.2 31.5 L33.3 36.5 L28.5 38 L27 36.2 Z" fill="#fff"/></svg>
<svg class="s" style="left:285px;top:402px" width="84" height="40" viewBox="0 0 84 40"><rect x="27.6" y="8.6" width="28.5" height="25.5" fill="none" stroke="#fff" stroke-width="1.3"/><rect x="27" y="8" width="29.5" height="6" fill="#fff"/><circle cx="53" cy="27" r="5.3" fill="#F4A11E" stroke="#3A7B14" stroke-width="0.8"/><circle cx="54" cy="26" r="1.3" fill="#3A7B14"/><path d="M49.5 29.5 L51.5 31.5 L46.5 36.5 L44.5 37 L43.5 35 Z" fill="#F4A11E"/></svg>
<svg class="s" style="left:375px;top:402px" width="84" height="40" viewBox="0 0 84 40"><path d="M37 5.7 H52.5 Q53.8 5.7 53.8 7 V36.7 Q53.8 38 52.5 38 H31.2 Q29.9 38 29.9 36.7 V12.8 Z" fill="#fff"/><path d="M36.6 6.2 V12.4 H30.4 Z" fill="#E6E6E6"/><g fill="#F4A11E"><rect x="41.9" y="13" width="10" height="5.1"/><rect x="32.1" y="16.9" width="7.7" height="11.3"/><rect x="41.9" y="20.1" width="10" height="15.8"/><rect x="32.1" y="30" width="7.7" height="5.9"/></g></svg>
<svg class="s" style="left:465px;top:402px" width="84" height="40" viewBox="0 0 84 40"><path d="M27 11 Q27 9 29 9 H37 L39 10.5 H56.5 Q58.2 10.5 58.2 12.5 V32 Q58.2 34 56.5 34 H28.5 Q26.5 34 26.5 32 Z" fill="#fff"/><path d="M26.5 12.6 H58.2" stroke="#37B34A" stroke-width="0.9"/><g fill="#F4A11E"><circle cx="35.7" cy="23.5" r="3.8"/><circle cx="48" cy="17.8" r="3.8"/><circle cx="48" cy="28.2" r="3.8"/></g><path d="M35.7 23.5 L48 17.8 M35.7 23.5 L48 28.2" stroke="#F4A11E" stroke-width="2.6"/></svg>
<svg class="s" style="left:285px;top:484px" width="84" height="30" viewBox="0 0 84 30"><rect x="29.2" y="6" width="17.6" height="24" rx="1" fill="#E6E2E6"/><path d="M49 7 L53.5 8.5 L55.7 10.5 V30 H49 Z" fill="#E6E2E6"/><rect x="33" y="11.1" width="9.7" height="13.5" fill="none" stroke="#3BB24B" stroke-width="2.4"/><rect x="34.2" y="17" width="7.3" height="1.6" fill="#3BB24B"/><path d="M42.5 23.5 L48.5 29 L54.5 23" fill="none" stroke="#9a9a9a" stroke-width="2.8"/></svg>
<svg class="s" style="left:375px;top:484px" width="84" height="30" viewBox="0 0 84 30"><path d="M36 6 H54.5 V30 H30 V12 Z" fill="#fff"/></svg>
<svg class="s" style="left:465px;top:484px" width="84" height="30" viewBox="0 0 84 30"><path d="M29.5 30 L31.5 24 L50 5.5 L57 12.5 L38.5 31 Z" fill="#fff"/><path d="M34 25 L52.5 7 M36.5 27.5 L55 9.5" stroke="#F5821F" stroke-width="1.2"/></svg>
<svg class="s" style="left:615px;top:242px" width="84" height="40" viewBox="0 0 84 40"><rect x="27" y="8.5" width="30" height="21" rx="2" fill="none" stroke="#fff" stroke-width="2.4"/><path d="M36 30 L35 34 H29 V36 H47 V34" fill="none" stroke="#fff" stroke-width="1.6"/><rect x="39.5" y="23.5" width="17.5" height="11" fill="#E0202E" stroke="#5A5A5A" stroke-width="1"/><rect x="44" y="20.5" width="8.5" height="3.5" fill="none" stroke="#E0202E" stroke-width="1.5"/><rect x="40" y="27.5" width="16.5" height="1" fill="#fff"/><rect x="43" y="26.5" width="2" height="3" fill="#fff"/><rect x="51" y="26.5" width="2" height="3" fill="#fff"/></svg>
<svg class="s" style="left:705px;top:242px" width="84" height="40" viewBox="0 0 84 40"><path d="M31 9 H36 V7 H48 V9 H53 V36.5 H31 Z" fill="none" stroke="#fff" stroke-width="2.4"/><circle cx="42" cy="8" r="2.4" fill="none" stroke="#fff" stroke-width="1.6"/><rect x="36.5" y="10" width="11" height="2.5" fill="#fff"/><g fill="#fff"><rect x="35" y="16" width="2" height="2"/><rect x="35" y="20.5" width="2" height="2"/><rect x="35" y="25" width="2" height="2"/><rect x="35" y="29.5" width="2" height="2"/></g><circle cx="50.3" cy="29.3" r="8.3" fill="#2DA8E0" stroke="#5A5A5A" stroke-width="1.2"/><rect x="49.2" y="28" width="2.4" height="6" fill="#fff" transform="skewX(-12) translate(6,0)"/><circle cx="51.5" cy="25.3" r="1.4" fill="#fff"/></svg>
<svg class="s" style="left:615px;top:324px" width="84" height="40" viewBox="0 0 84 40"><path d="M31.5 10 H56.5 Q58 10 57.6 11.5 L52.6 33.5 Q52.2 35 50.7 35 H26.8 Q25.5 35 25.8 33.5 L30.3 11.5 Q30.6 10 31.5 10 Z" fill="#0B7A44"/><path d="M37.5 14 L45.5 22 L35 30" fill="none" stroke="#999" stroke-width="2.2" stroke-linecap="round"/><path d="M40 29.5 H47" stroke="#999" stroke-width="2" stroke-linecap="round"/></svg>
<div class="r" style="left:0px;top:514px;width:800px;height:3px;background:linear-gradient(to right,#222 0px,#2a2a2a 60px,#555 100px,#9a9a9a 220px,#b0b0b0 300px,#a5a5a5 420px,#8a8a8a 490px,#5a5a5a 590px,#1e1e1e 750px,#1a1a1a 800px);"></div>
</body></html>
